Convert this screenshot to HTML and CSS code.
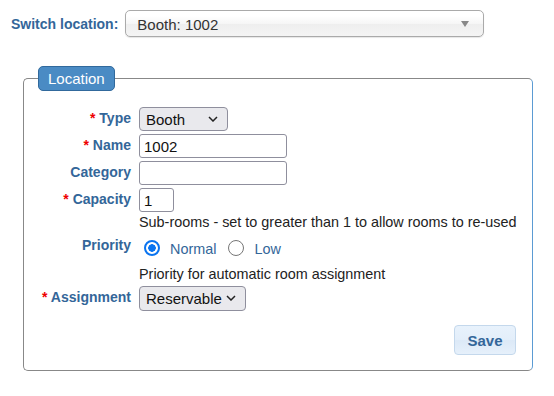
FILE: index.html
```html
<!DOCTYPE html>
<html lang="en">
<head>
    <meta charset="UTF-8">
    <meta name="viewport" content="width=device-width, initial-scale=1.0">
    <title>Location</title>
    <link rel="stylesheet" href="styles.css">
</head>
<body>
    <div class="switch-bar">
        <label class="switch-label">Switch location:</label>
        <div class="chosen">
            <span>Booth: 1002</span>
            <b class="chosen-arrow"></b>
        </div>
    </div>

    <fieldset class="location">
        <legend>Location</legend>
        <div class="form-grid">
            <label class="field-label"><span class="req">*</span> Type</label>
            <div class="field">
                <span class="select-wrap type-select">
                    <select><option>Booth</option></select>
                    <svg class="chev" width="10" height="6" viewBox="0 0 10 6"><path d="M1 1l4 4 4-4" fill="none" stroke="#222" stroke-width="1.5"/></svg>
                </span>
            </div>

            <label class="field-label"><span class="req">*</span> Name</label>
            <div class="field"><input type="text" class="text-input" value="1002"></div>

            <label class="field-label">Category</label>
            <div class="field"><input type="text" class="text-input" value=""></div>

            <label class="field-label"><span class="req">*</span> Capacity</label>
            <div class="field">
                <input type="text" class="text-input small" value="1">
                <div class="hint">Sub-rooms - set to greater than 1 to allow rooms to re-used</div>
            </div>

            <label class="field-label">Priority</label>
            <div class="field">
                <div class="radio-group">
                    <label class="radio"><input type="radio" name="prio" checked> Normal</label>
                    <label class="radio"><input type="radio" name="prio"> Low</label>
                </div>
                <div class="hint">Priority for automatic room assignment</div>
            </div>

            <label class="field-label"><span class="req">*</span> Assignment</label>
            <div class="field">
                <span class="select-wrap assign-select">
                    <select><option>Reservable</option></select>
                    <svg class="chev" width="10" height="6" viewBox="0 0 10 6"><path d="M1 1l4 4 4-4" fill="none" stroke="#222" stroke-width="1.5"/></svg>
                </span>
            </div>
        </div>
        <div class="actions">
            <button>Save</button>
        </div>
    </fieldset>
</body>
</html>
```

FILE: styles.css
```css
body {
    font-family: "Liberation Sans", Arial, sans-serif;
    font-size: 14px;
    margin: 0;
    padding: 0;
    background: white;
    color: #222;
}
.switch-bar {
    display: flex;
    align-items: center;
    gap: 7px;
    padding: 10px 0 0 11px;
}
.switch-label {
    font-weight: bold;
    color: #336699;
}
.chosen {
    position: relative;
    box-sizing: border-box;
    width: 359px;
    height: 27px;
    padding: 3px 0 0 11px;
    border: 1px solid #aaa;
    border-radius: 5px;
    background: linear-gradient(#fff 20%, #f6f6f6 50%, #eee 52%, #f4f4f4 100%);
    box-shadow: 0 1px 1px rgba(0, 0, 0, 0.1);
    font-size: 15px;
    line-height: 22px;
    color: #333;
}
.chosen-arrow {
    position: absolute;
    right: 14px;
    top: 10px;
    width: 0;
    height: 0;
    border-left: 4px solid transparent;
    border-right: 4px solid transparent;
    border-top: 6px solid #888;
}
.location {
    box-sizing: border-box;
    width: 510px;
    margin: 29px 0 0 23px;
    padding: 16px 16px 15px 14px;
    border: 1px solid #888;
    border-right-color: #5b9bd3;
    border-radius: 5px;
}
.location legend {
    box-sizing: border-box;
    height: 25px;
    padding: 0 9px;
    line-height: 23px;
    font-size: 15px;
    color: white;
    background: #4a8bc4;
    border: 1px solid #31699c;
    border-radius: 5px;
}
.form-grid {
    display: grid;
    grid-template-columns: 93px 1fr;
    column-gap: 8px;
    row-gap: 3px;
    align-items: start;
}
.field-label {
    text-align: right;
    font-weight: bold;
    color: #336699;
    line-height: 22px;
    white-space: nowrap;
}
.req {
    color: #e00;
}
.field {
    display: flex;
    flex-direction: column;
    align-items: flex-start;
    min-width: 0;
}
.text-input {
    box-sizing: border-box;
    width: 148px;
    height: 24px;
    margin: 0;
    padding: 1px 4px 0;
    border: 1px solid #8f8f9d;
    border-radius: 3px;
    font-family: inherit;
    font-size: 15px;
    color: #111;
}
.text-input.small {
    width: 35px;
}
.hint {
    margin-top: 2px;
    line-height: 17px;
    font-size: 14.4px;
    white-space: nowrap;
    color: #222;
}
.select-wrap {
    position: relative;
    display: inline-block;
}
.select-wrap select {
    appearance: none;
    box-sizing: border-box;
    height: 24px;
    margin: 0;
    padding: 0 0 0 6px;
    border: 1px solid #8f8f9d;
    border-radius: 4px;
    background: #e9e9ed;
    font-family: inherit;
    font-size: 15px;
    color: #111;
}
.type-select select {
    width: 89px;
}
.assign-select select {
    width: 107px;
    height: 25px;
}
.chev {
    position: absolute;
    right: 10px;
    top: 9px;
    pointer-events: none;
}
.radio-group {
    display: flex;
    align-items: center;
    padding: 6px 0 8px 5px;
    height: 16px;
}
.radio {
    display: flex;
    align-items: center;
    gap: 10px;
    margin-right: 12px;
    color: #336699;
    font-size: 14.4px;
    line-height: 16px;
    padding-top: 2px;
}
.radio input {
    appearance: none;
    box-sizing: border-box;
    width: 16px;
    height: 16px;
    margin: -2px 0 0 0;
    border: 1px solid #767676;
    border-radius: 50%;
    background: white;
}
.radio input:checked {
    border: 2px solid #0a74f0;
    background: radial-gradient(circle, #0a74f0 0 3.5px, #fff 4px);
}
.actions {
    display: flex;
    justify-content: flex-end;
    margin-top: 14px;
}
button {
    box-sizing: border-box;
    width: 62px;
    height: 30px;
    border: 1px solid #c4d8ec;
    border-radius: 4px;
    background: linear-gradient(#e8f2fc 0%, #e3eefa 50%, #dce9f7 52%, #e6f0fb 100%);
    color: #336699;
    font-family: inherit;
    font-weight: bold;
    font-size: 15px;
    cursor: pointer;
}
```
